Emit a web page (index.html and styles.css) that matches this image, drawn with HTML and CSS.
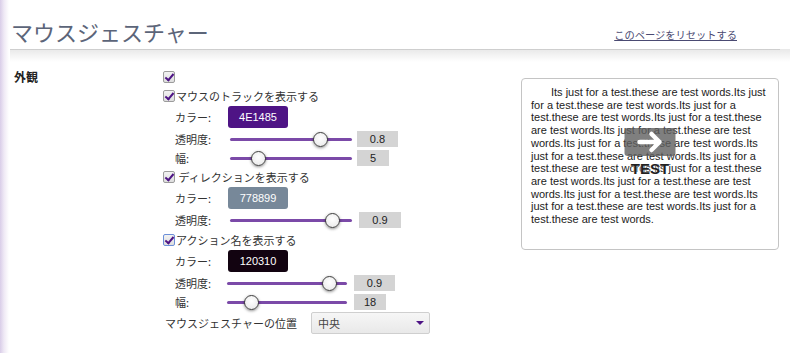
FILE: index.html
```html
<!DOCTYPE html>
<html lang="ja">
<head>
  <meta charset="UTF-8">
  <title>マウスジェスチャー</title>
  <link rel="stylesheet" href="styles.css">
</head>
<body>

<div class="page">
  <div class="header">
    <h1 class="title">マウスジェスチャー</h1>
    <a class="reset-link" href="#">このページをリセットする</a>
  </div>

  <div class="settings">
    <div class="section-label">外観</div>

    <div class="options">
      <label class="check-row"><input type="checkbox" class="check" checked></label>

      <label class="check-row"><input type="checkbox" class="check" checked>マウスのトラックを表示する</label>
      <div class="sub">
        <div class="field color-row">
          <span class="field-label">カラー:</span>
          <span class="swatch" style="background:#4E1485">4E1485</span>
        </div>
        <div class="field slider-row">
          <span class="field-label">透明度:</span>
          <input type="range" class="slider" min="0" max="1" step="0.01" value="0.78">
          <span class="value-box">0.8</span>
        </div>
        <div class="field slider-row slider-row--short">
          <span class="field-label">幅:</span>
          <input type="range" class="slider" min="1" max="21" step="0.1" value="5">
          <span class="value-box value-box--small">5</span>
        </div>
      </div>

      <label class="check-row"><input type="checkbox" class="check" checked>&nbsp;ディレクションを表示する</label>
      <div class="sub">
        <div class="field color-row">
          <span class="field-label">カラー:</span>
          <span class="swatch" style="background:#778899">778899</span>
        </div>
        <div class="field slider-row">
          <span class="field-label">透明度:</span>
          <input type="range" class="slider" min="0" max="1" step="0.01" value="0.89">
          <span class="value-box value-box--wide">0.9</span>
        </div>
      </div>

      <label class="check-row"><input type="checkbox" class="check check--focused" checked>アクション名を表示する</label>
      <div class="sub sub--narrow">
        <div class="field color-row">
          <span class="field-label">カラー:</span>
          <span class="swatch" style="background:#120310">120310</span>
        </div>
        <div class="field slider-row">
          <span class="field-label">透明度:</span>
          <input type="range" class="slider" min="0" max="1" step="0.01" value="0.9">
          <span class="value-box">0.9</span>
        </div>
        <div class="field slider-row slider-row--short">
          <span class="field-label">幅:</span>
          <input type="range" class="slider" min="0" max="1" step="0.01" value="0.16">
          <span class="value-box value-box--small">18</span>
        </div>
      </div>

      <div class="field position-row">
        <span class="position-label">マウスジェスチャーの位置</span>
        <span class="select-wrap">
          <select class="select">
            <option>中央</option>
          </select>
        </span>
      </div>
    </div>

    <div class="preview">
      Its just for a test.these are test words.Its just for a test.these are test words.Its just for a test.these are test words.Its just for a test.these are test words.Its just for a test.these are test words.Its just for a test.these are test words.Its just for a test.these are test words.Its just for a test.these are test words.Its just for a test.these are test words.Its just for a test.these are test words.Its just for a test.these are test words.Its just for a test.these are test words.Its just for a test.these are test words.
      <div class="preview-arrow">
        <svg width="51" height="28" viewBox="0 0 51 28">
          <path d="M15 14 H35 M27 6 L35 14 L27 22" fill="none" stroke="#fff" stroke-width="4.5" stroke-linecap="round" stroke-linejoin="round"/>
        </svg>
      </div>
      <div class="preview-label">TEST</div>
    </div>
  </div>
</div>

</body>
</html>
```

FILE: styles.css
```css
* { box-sizing: border-box; }

body {
  margin: 0;
  min-height: 353px;
  font-family: "Liberation Sans", "Noto Sans CJK JP", sans-serif;
  font-size: 11px;
  color: #333;
  background: linear-gradient(to right, #d9cde8 0, #efe9f5 4px, #fff 9px);
}

.page {
  padding: 0 20px 0 10px;
}

/* header */
.header {
  position: relative;
  display: flex;
  justify-content: space-between;
  align-items: flex-end;
  height: 50px;
  padding: 0 43px 5px 1px;
  border-bottom: 1px solid #e2e2e2;
}

.header::after {
  content: "";
  position: absolute;
  left: 0;
  right: -10px;
  top: 100%;
  height: 13px;
  background: linear-gradient(to bottom, rgba(0, 0, 0, 0.09), rgba(0, 0, 0, 0));
}

.title {
  margin: 0;
  font-family: "Noto Sans CJK JP", sans-serif;
  font-size: 22px;
  font-weight: normal;
  line-height: 26px;
  color: #5c6579;
}

.reset-link {
  font-family: "Noto Sans CJK JP", sans-serif;
  font-size: 10.25px;
  line-height: 14px;
  color: #4a4a72;
  margin-bottom: 2px;
}

/* settings */
.settings {
  display: grid;
  grid-template-columns: 149px 358px 258px;
  margin-top: 17px;
  padding-left: 4px;
}

.section-label {
  font-family: "Noto Sans CJK JP", sans-serif;
  font-size: 12px;
  font-weight: bold;
  line-height: 19px;
  color: #222;
}

.check-row {
  display: flex;
  align-items: center;
  height: 19px;
  font-family: "Noto Sans CJK JP", sans-serif;
}

.check {
  -webkit-appearance: none;
  appearance: none;
  position: relative;
  width: 12px;
  height: 12px;
  margin: 0 1px 0 0;
  border: 1px solid #9c9c9c;
  border-radius: 2px;
  background: linear-gradient(#f2f2f2, #dedede);
}

.check:checked::after {
  content: "";
  position: absolute;
  left: 3px;
  top: 0;
  width: 3px;
  height: 7px;
  border: solid #4e1485;
  border-width: 0 2px 2px 0;
  transform: rotate(40deg);
}

.check--focused {
  border-color: #6c8fd8;
}

.sub {
  padding-left: 12px;
}

.field {
  display: flex;
  align-items: center;
}

.field-label {
  width: 53px;
  font-family: "Noto Sans CJK JP", sans-serif;
}

.color-row { height: 24px; }
.slider-row { height: 20px; }
.slider-row--short { height: 18px; }

.swatch {
  width: 60px;
  height: 22px;
  line-height: 22px;
  border-radius: 3px;
  text-align: center;
  color: #fff;
}

.slider {
  -webkit-appearance: none;
  appearance: none;
  width: 122px;
  height: 16px;
  margin: 0 5px 0 2px;
  background: transparent;
}

.slider::-webkit-slider-runnable-track {
  height: 3px;
  border-radius: 2px;
  background: #7b4aa8;
}

.slider::-webkit-slider-thumb {
  -webkit-appearance: none;
  width: 15px;
  height: 15px;
  margin-top: -6px;
  border: 1.5px solid #3c3c3c;
  border-radius: 50%;
  background: radial-gradient(circle at 50% 40%, #fff, #e6e6e6);
  box-shadow: 0 1px 3px rgba(0, 0, 0, 0.45);
}

.value-box {
  width: 41px;
  height: 16px;
  line-height: 16px;
  text-align: center;
  background: #d4d4d4;
  color: #222;
}

.value-box--small { width: 32px; }
.value-box--wide { width: 42px; margin-left: 2px; }

.sub--narrow .slider {
  width: 120px;
  margin: 0 7px 0 -1px;
}

.position-row {
  height: 23px;
}

.position-label {
  width: 148px;
  padding-left: 2px;
  font-family: "Noto Sans CJK JP", sans-serif;
}

.select-wrap {
  position: relative;
}

.select-wrap::after {
  content: "";
  position: absolute;
  right: 6px;
  top: 9px;
  border-left: 4px solid transparent;
  border-right: 4px solid transparent;
  border-top: 4px solid #4e1485;
}

.select {
  -webkit-appearance: none;
  appearance: none;
  width: 119px;
  height: 22px;
  padding: 0 6px;
  border: 1px solid #cfcfcf;
  border-radius: 2px;
  background: linear-gradient(#f6f6f6, #e9e9e9);
  font-family: "Noto Sans CJK JP", sans-serif;
  font-size: 11px;
  color: #444;
}

/* preview */
.preview {
  position: relative;
  align-self: start;
  height: 172px;
  margin-top: 11px;
  padding: 7px 8px 0 9px;
  border: 1px solid #c4c4c4;
  border-radius: 4px;
  text-indent: 20px;
  line-height: 12.7px;
  color: #222;
}

.preview-arrow {
  position: absolute;
  left: 50%;
  top: 49px;
  width: 51px;
  height: 28px;
  transform: translateX(-50%);
  border-radius: 3px;
  background: rgba(95, 95, 95, 0.8);
  text-indent: 0;
}

.preview-arrow svg { display: block; }

.preview-label {
  position: absolute;
  left: 0;
  right: 0;
  top: 84px;
  text-align: center;
  text-indent: 0;
  font-size: 15px;
  font-weight: bold;
  color: #222;
  text-shadow: 0 0 2px #fff;
}
```
